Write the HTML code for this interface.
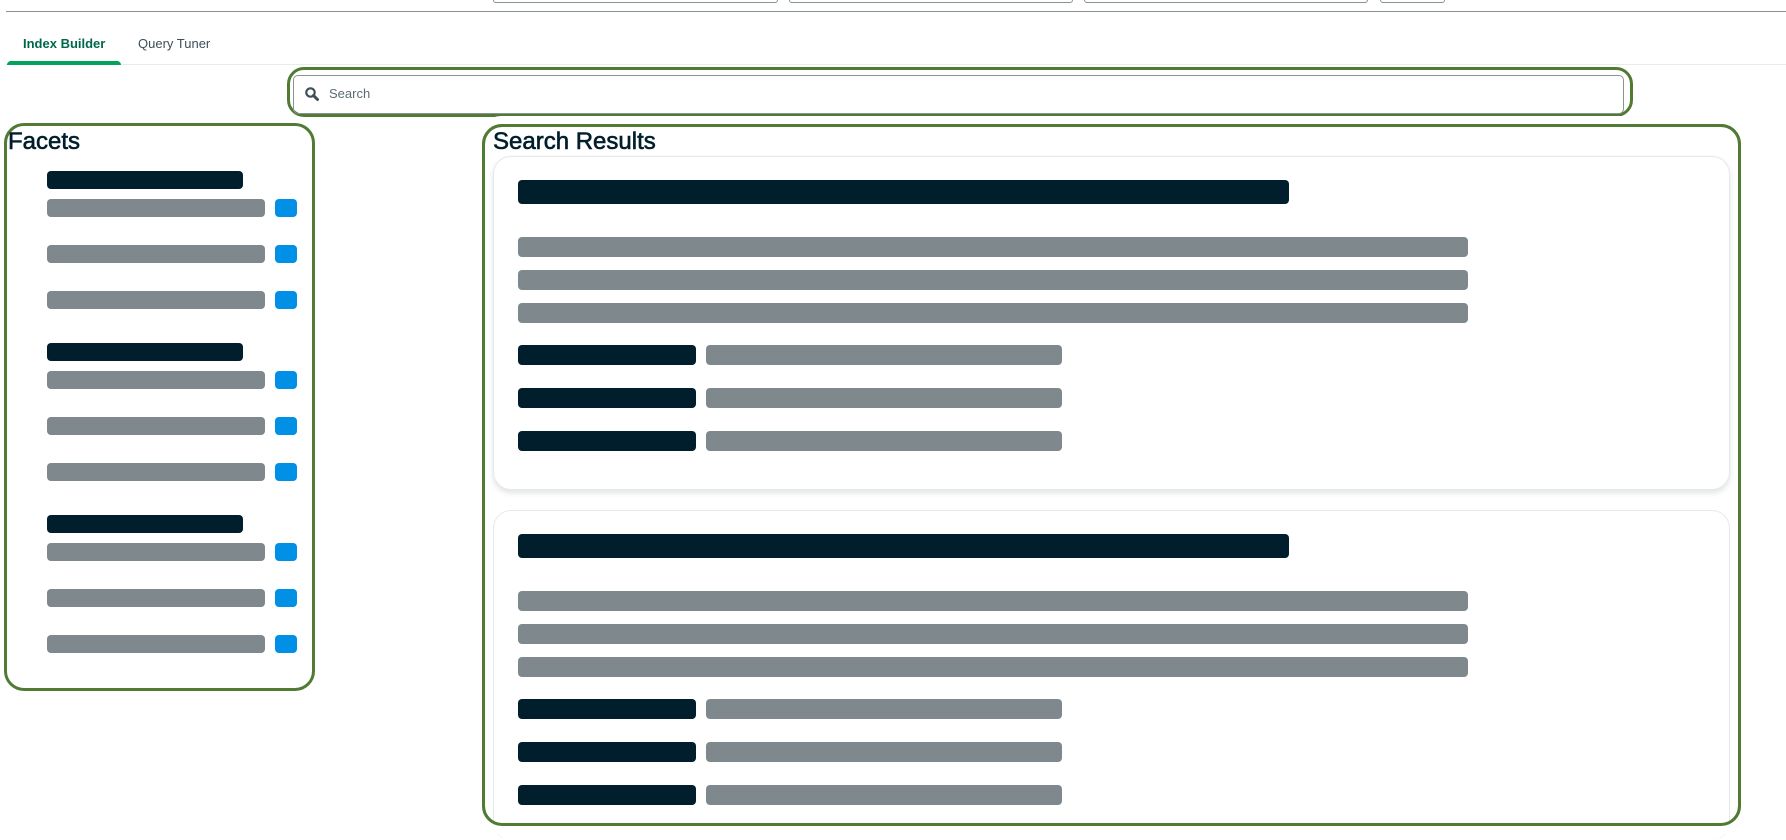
<!DOCTYPE html>
<html><head><meta charset="utf-8"><style>
*{margin:0;padding:0;box-sizing:border-box}
body{width:1786px;height:832px;overflow:hidden;background:#fff;font-family:"Liberation Sans",sans-serif;position:relative}
.a{position:absolute}
.tb{border:1px solid #889397;border-top:none;border-radius:0 0 5px 5px;height:3px;top:0}
.d{background:#001e2b;border-radius:4px;position:absolute}
.g{background:#7f898d;border-radius:4px;position:absolute}
.b{background:#0090e6;border-radius:4px;position:absolute}
.card{position:absolute;border:1px solid #e6e9ea;border-radius:18px;box-shadow:0 3px 6px rgba(0,30,43,0.12);background:#fff}
.h{-webkit-text-stroke:0.6px #001e2b}
</style></head><body>
<div class="a tb" style="left:493px;width:285px"></div>
<div class="a tb" style="left:789px;width:284px"></div>
<div class="a tb" style="left:1084px;width:284px"></div>
<div class="a tb" style="left:1380px;width:65px"></div>
<div class="a" style="left:6px;right:0;top:11px;height:1px;background:#8a8f91"></div>

<div class="a" style="left:23px;top:36px;font-size:13px;font-weight:bold;color:#00684a">Index Builder</div>
<div class="a" style="left:138px;top:36px;font-size:13px;color:#3d4f58">Query Tuner</div>
<div class="a" style="left:6px;right:0;top:64px;height:1px;background:#e8edeb"></div>
<div class="a" style="left:7px;width:114px;top:61px;height:4px;background:#00a35c;border-radius:4px 4px 0 0"></div>

<div class="a" style="left:287px;top:67px;width:1346px;height:50px;border:3px solid #517a33;border-radius:17px"></div>
<div class="a" style="left:293px;top:75px;width:1331px;height:39px;border:1px solid #889397;border-radius:5px"></div>
<svg class="a" style="left:304px;top:86px" width="16" height="16" viewBox="0 0 16 16"><circle cx="6.5" cy="6.5" r="4.2" fill="none" stroke="#3d4f58" stroke-width="2.2"/><path d="M9.5 9.5 L13.5 13.5" stroke="#3d4f58" stroke-width="3" stroke-linecap="round"/></svg>
<div class="a" style="left:329px;top:86px;font-size:13px;color:#5c6c75">Search</div>

<div class="a" style="left:4px;top:123px;width:311px;height:568px;border:3px solid #517a33;border-radius:20px"></div>
<div class="a h" style="left:8px;top:128px;font-size:24px;color:#001e2b">Facets</div>

<div class="a" style="left:482px;top:124px;width:1259px;height:702px;border:3px solid #517a33;border-radius:20px"></div>
<div class="a h" style="left:493px;top:128px;font-size:24px;color:#001e2b">Search Results</div>

<div id="f"></div>
<div class="card" style="left:493px;top:156px;width:1237px;height:334px"></div>
<div class="card" style="left:493px;top:510px;width:1237px;height:330px;border-bottom:none;box-shadow:none"></div>
<div id="r"></div>
<script>
var h='';
[171,343,515].forEach(function(y){
h+='<div class="d" style="left:47px;top:'+y+'px;width:196px;height:18px"></div>';
[28,74,120].forEach(function(o){
h+='<div class="g" style="left:47px;top:'+(y+o)+'px;width:218px;height:18px"></div>';
h+='<div class="b" style="left:275px;top:'+(y+o)+'px;width:22px;height:18px"></div>';
});});
document.getElementById('f').outerHTML=h;
h='';
[0,354].forEach(function(o){
h+='<div class="d" style="left:518px;top:'+(180+o)+'px;width:771px;height:24px"></div>';
[237,270,303].forEach(function(y){h+='<div class="g" style="left:518px;top:'+(y+o)+'px;width:950px;height:20px"></div>';});
[345,388,431].forEach(function(y){
if(y+o<820){
h+='<div class="d" style="left:518px;top:'+(y+o)+'px;width:178px;height:20px"></div>';
h+='<div class="g" style="left:706px;top:'+(y+o)+'px;width:356px;height:20px"></div>';}
});});
document.getElementById('r').outerHTML=h;
</script>
<div class="a" style="left:482px;top:124px;width:1259px;height:702px;border:3px solid #517a33;border-radius:20px;box-shadow:0 0 0 8px #fff"></div>
</body></html>
